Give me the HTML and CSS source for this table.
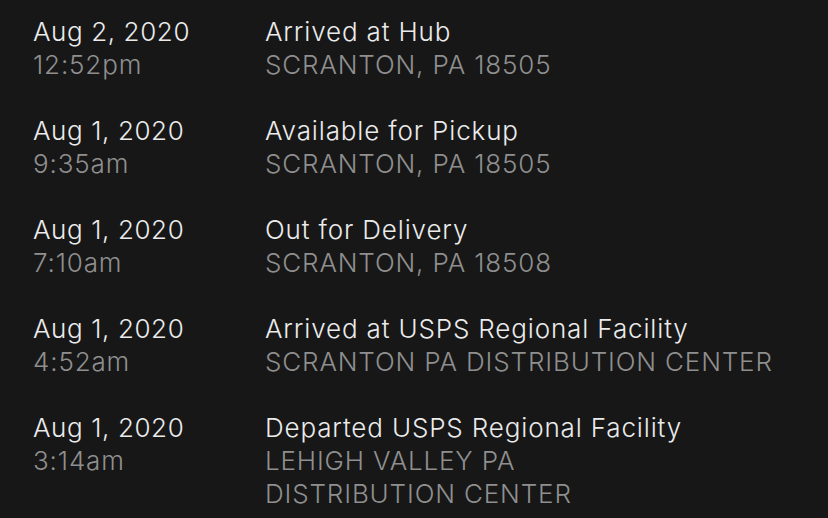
FILE: index.html
```html
<!DOCTYPE html>
<html>
<head>
<meta charset="utf-8">
<link rel="stylesheet" href="styles.css">
</head>
<body>
<div class="list">
  <div class="row">
    <div class="when"><div class="date">Aug 2, 2020</div><div class="time">12:52pm</div></div>
    <div class="what"><div class="status">Arrived at Hub</div><div class="place">SCRANTON, PA 18505</div></div>
  </div>
  <div class="row">
    <div class="when"><div class="date">Aug 1, 2020</div><div class="time">9:35am</div></div>
    <div class="what"><div class="status">Available for Pickup</div><div class="place">SCRANTON, PA 18505</div></div>
  </div>
  <div class="row">
    <div class="when"><div class="date">Aug 1, 2020</div><div class="time">7:10am</div></div>
    <div class="what"><div class="status">Out for Delivery</div><div class="place">SCRANTON, PA 18508</div></div>
  </div>
  <div class="row">
    <div class="when"><div class="date">Aug 1, 2020</div><div class="time">4:52am</div></div>
    <div class="what"><div class="status">Arrived at USPS Regional Facility</div><div class="place">SCRANTON PA DISTRIBUTION CENTER</div></div>
  </div>
  <div class="row">
    <div class="when"><div class="date">Aug 1, 2020</div><div class="time">3:14am</div></div>
    <div class="what"><div class="status">Departed USPS Regional Facility</div><div class="place">LEHIGH VALLEY PA<br>DISTRIBUTION CENTER</div></div>
  </div>
</div>
</body>
</html>
```
FILE: styles.css
```css
html, body {
  margin: 0;
  background: #171717;
}
body {
  font-family: Inter, "Noto Sans", sans-serif;
  font-size: 26px;
  font-weight: 350;
  letter-spacing: 0.85px;
  line-height: 33px;
  color: #ebebeb;
  overflow: hidden;
}
.list {
  display: flex;
  flex-direction: column;
  gap: 33px;
  padding: 15px 0 0 33px;
}
.row {
  display: grid;
  grid-template-columns: 232px auto;
}
.date {
  letter-spacing: 0.6px;
}
.time, .place {
  color: #8f8f8f;
}
```
